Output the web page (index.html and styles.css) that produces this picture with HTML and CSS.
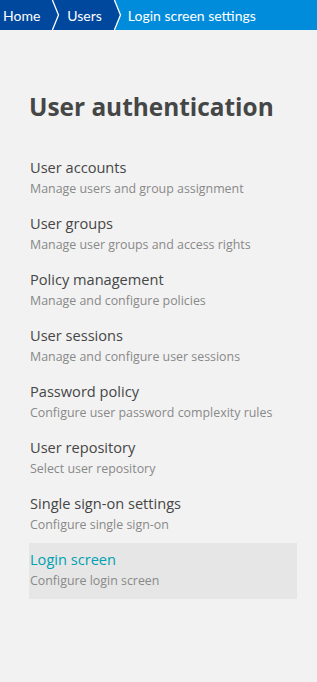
FILE: index.html
```html
<!DOCTYPE html>
<html>
<head>
<meta charset="utf-8">
<link rel="stylesheet" href="styles.css">
</head>
<body>
<nav class="crumbs">
  <a class="crumb dark first">Home</a>
  <svg class="sep" width="10" height="30" viewBox="0 0 10 30"><rect width="10" height="30" fill="#00479e"/><polygon points="0,0 6,15 0,30" fill="#00479e"/><polyline points="0,-1 6.5,15 0,31" fill="none" stroke="#fff" stroke-width="1.3"/></svg>
  <a class="crumb dark">Users</a>
  <svg class="sep" width="10" height="30" viewBox="0 0 10 30"><rect width="10" height="30" fill="#008cdb"/><polygon points="0,0 6,15 0,30" fill="#00479e"/><polyline points="0,-1 6.5,15 0,31" fill="none" stroke="#fff" stroke-width="1.3"/></svg>
  <a class="crumb light">Login screen settings</a>
</nav>
<main class="content">
  <h1 class="title">User authentication</h1>
  <ul class="menu">
    <li class="item"><div class="item-title">User accounts</div><div class="item-desc">Manage users and group assignment</div></li>
    <li class="item"><div class="item-title">User groups</div><div class="item-desc">Manage user groups and access rights</div></li>
    <li class="item"><div class="item-title">Policy management</div><div class="item-desc">Manage and configure policies</div></li>
    <li class="item"><div class="item-title">User sessions</div><div class="item-desc">Manage and configure user sessions</div></li>
    <li class="item"><div class="item-title">Password policy</div><div class="item-desc">Configure user password complexity rules</div></li>
    <li class="item"><div class="item-title">User repository</div><div class="item-desc">Select user repository</div></li>
    <li class="item"><div class="item-title">Single sign-on settings</div><div class="item-desc">Configure single sign-on</div></li>
    <li class="item active"><div class="item-title">Login screen</div><div class="item-desc">Configure login screen</div></li>
  </ul>
</main>
</body>
</html>
```
FILE: styles.css
```css
html, body {
  margin: 0;
  padding: 0;
  background: #f2f2f2;
  font-family: "Open Sans", "Noto Sans", sans-serif;
}
.crumbs {
  display: flex;
  height: 30px;
  background: #008cdb;
  font-family: Lato, "Open Sans", sans-serif;
}
.crumb {
  display: flex;
  align-items: center;
  height: 30px;
  color: #fff;
  font-size: 14px;
  white-space: nowrap;
}
.crumb.dark { background: #00479e; }
.crumb.first { padding-left: 3px; padding-right: 12px; }
.crumb.dark:not(.first) { padding-left: 5px; padding-right: 12px; }
.crumb.light { padding-left: 4px; }
.sep { display: block; flex: none; }
.content {
  padding: 0 20px 0 29px;
}
.title {
  margin: 0;
  padding-top: 62px;
  font-size: 24.4px;
  line-height: 30px;
  font-weight: 700;
  color: #454646;
}
.menu {
  list-style: none;
  margin: 29px 0 0;
  padding: 0;
}
.item {
  height: 56px;
  padding: 6px 1px 0;
  box-sizing: border-box;
}
.item.active { background: #e6e6e6; }
.item-title {
  font-size: 14.6px;
  line-height: 20px;
  color: #454646;
}
.item.active .item-title { color: #00a1b2; }
.item-desc {
  margin-top: 2px;
  font-size: 12.4px;
  line-height: 20px;
  color: #898989;
}
```
